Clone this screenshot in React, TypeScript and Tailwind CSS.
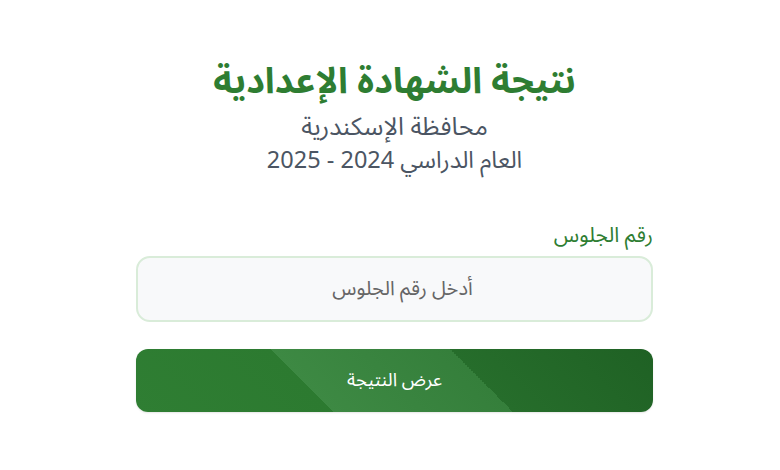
export default function App() {
  return (
    <div
      dir="rtl"
      className="min-h-[470px] w-full bg-white flex flex-col items-center pl-[9px] pt-[60px]"
      style={{ fontFamily: '"Noto Sans Arabic", "DejaVu Sans", sans-serif' }}
    >
      {/* Heading */}
      <h1 className="text-[36px] leading-[44px] font-bold text-[#2e7d32]">نتيجة الشهادة الإعدادية</h1>
      <p className="text-[25px] leading-[32px] text-[#4b5563] mt-[7px]">محافظة الإسكندرية</p>
      <p className="text-[23.5px] leading-[32px] text-[#4b5563] mt-[2px]">العام الدراسي 2024 - 2025</p>

      {/* Form */}
      <div className="w-[517px] mt-[45px] flex flex-col">
        <label className="text-[21px] leading-[26px] text-[#2e7d32] mb-[8px]">رقم الجلوس</label>
        <input
          type="text"
          placeholder="أدخل رقم الجلوس"
          className="h-[66px] w-full rounded-[14px] border-2 border-[#d9ecd9] bg-[#f8f9fa] pl-4 text-center text-[20px] text-[#555] placeholder:text-[#666] outline-none"
        />
        <button className="mt-[27px] h-[63px] w-full rounded-[12px] text-white text-[18.5px] bg-[linear-gradient(45deg,#2f7e33_0%,#2c7a30_34%,#3d8943_34%,#357f3b_65%,#266d2b_65%,#1f6124_100%)] shadow-[0_1px_2px_rgba(0,0,0,0.1)]">
          عرض النتيجة
        </button>
      </div>
    </div>
  );
}
